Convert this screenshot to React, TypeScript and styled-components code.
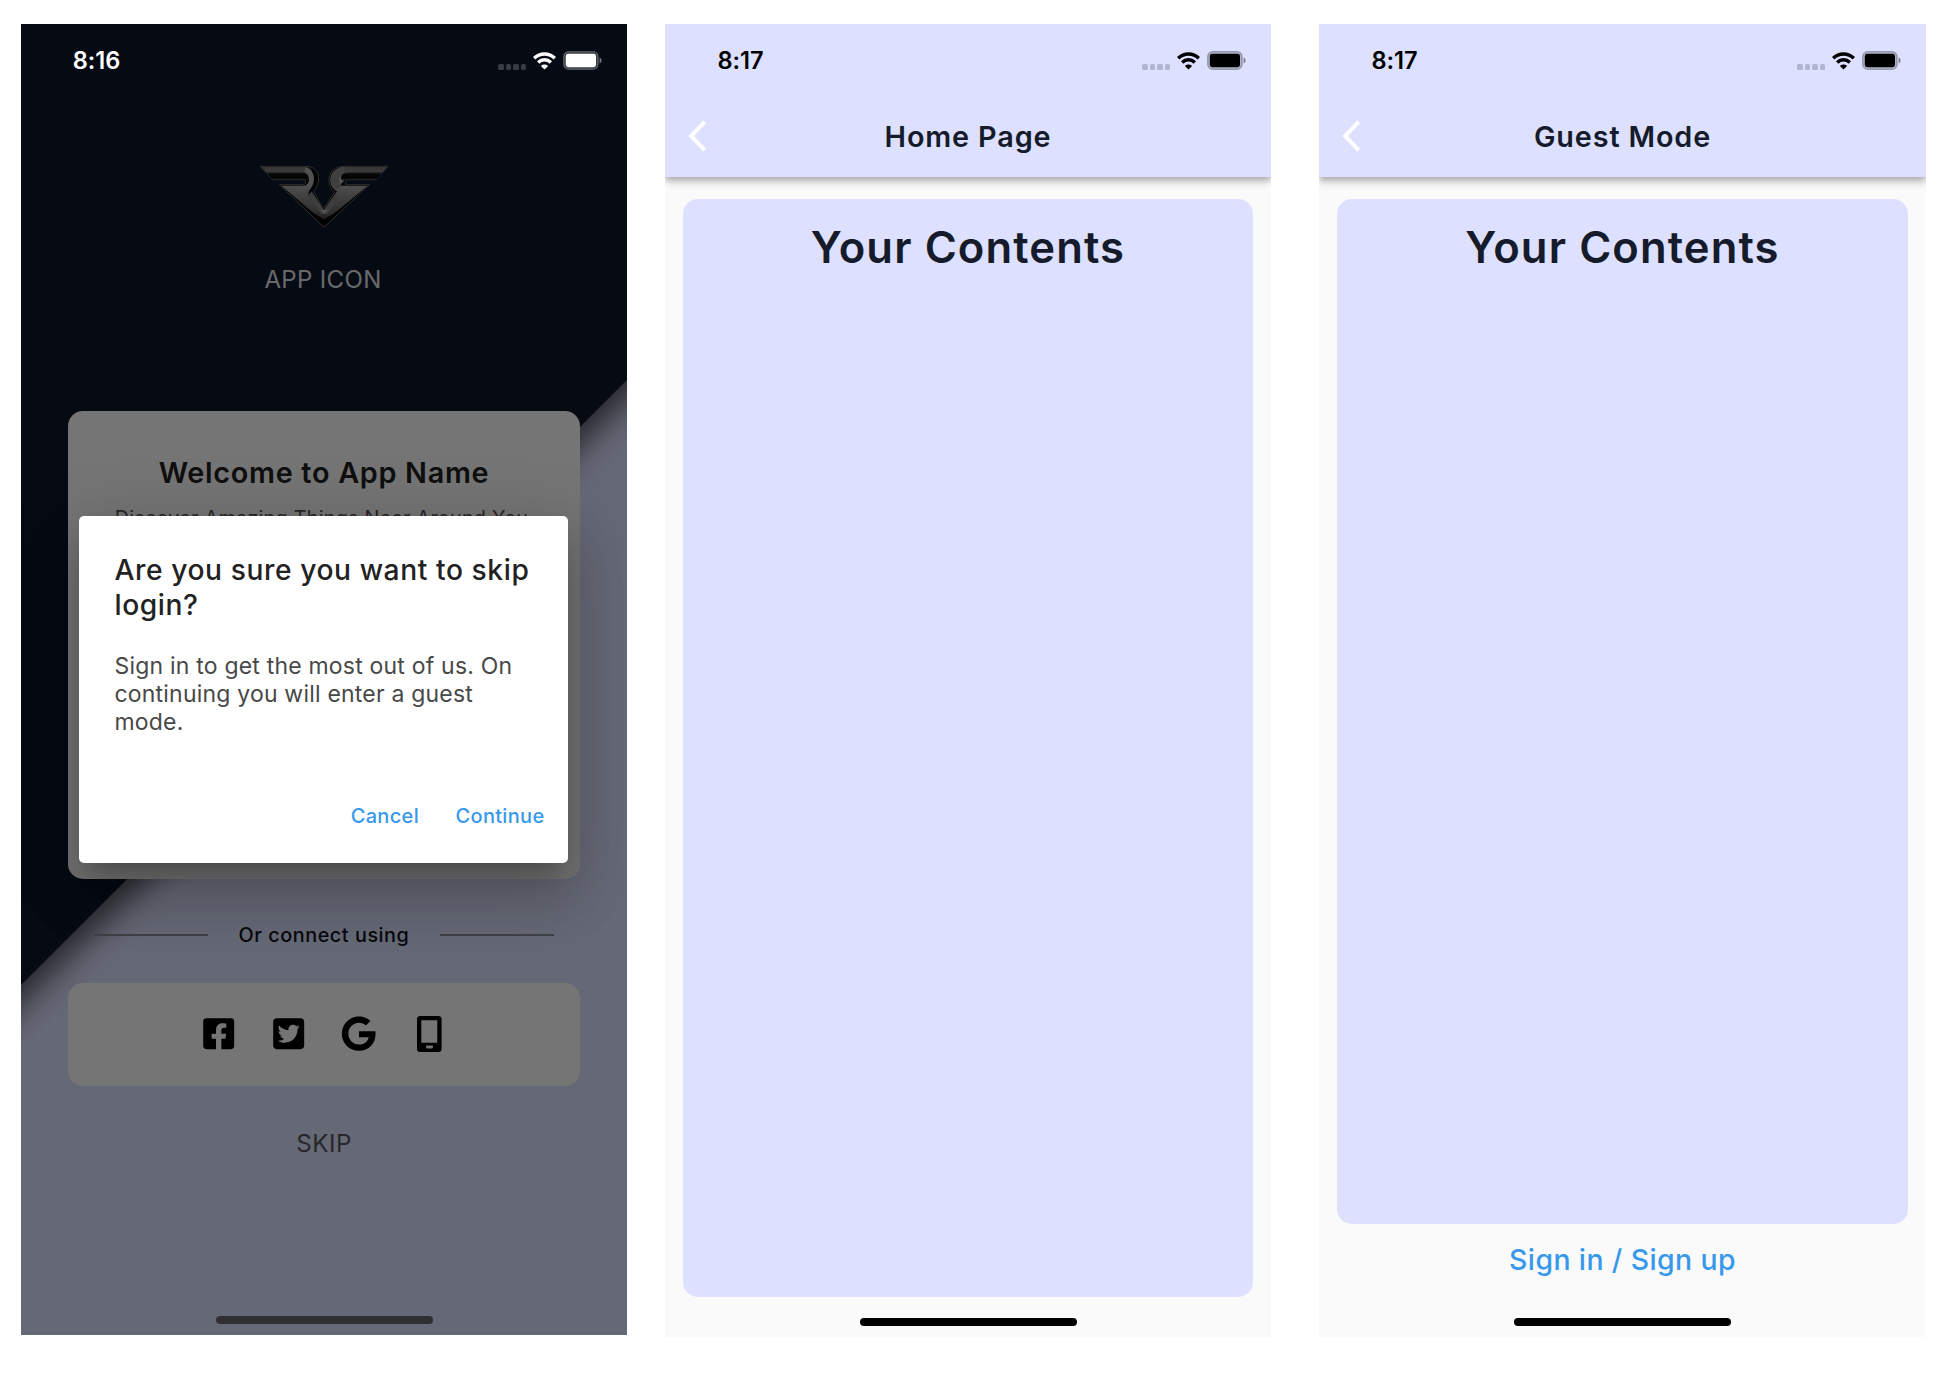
import React from "react";
import styled, { createGlobalStyle } from "styled-components";
import { FaFacebookSquare, FaTwitterSquare, FaGoogle } from "react-icons/fa";

const GlobalStyle = createGlobalStyle`
  * { box-sizing: border-box; }
  body {
    margin: 0;
    background: #fff;
    font-family: Inter, "Liberation Sans", sans-serif;
  }
`;

const Stage = styled.main`
  display: grid;
  grid-template-columns: 606px 606px 607px;
  column-gap: 38px;
  align-items: start;
  width: 1950px;
  height: 1374px;
  padding: 24px 0 0 21px;
  overflow: hidden;

  & > :last-child { margin-left: 10px; margin-right: -10px; }
`;

const Phone = styled.section<{ $bg: string; $height: number }>`
  position: relative;
  display: flex;
  flex-direction: column;
  height: ${(p) => p.$height}px;
  background: ${(p) => p.$bg};
  overflow: hidden;
`;

/* Status bar */

const StatusRow = styled.div<{ $color: string }>`
  position: relative;
  z-index: 3;
  display: flex;
  flex: none;
  align-items: center;
  justify-content: space-between;
  height: 73px;
  padding-right: 25px;
  color: ${(p) => p.$color};
`;

const Clock = styled.span`
  width: 151px;
  text-align: center;
  font-size: 23.6px;
  font-weight: 600;
  letter-spacing: -0.1px;
`;

const Indicators = styled.div`
  display: flex;
  align-items: center;
`;

const Dots = styled.div`
  display: flex;
  gap: 2.2px;
  margin: 12px 7px 0 0;
`;

const Dot = styled.i`
  width: 5.3px;
  height: 6px;
  border-radius: 1.5px;
  background: currentColor;
  opacity: 0.2;
`;

const Wifi = styled.svg`
  width: 23px;
  height: 18px;
  margin-right: 7px;
`;

const Battery = styled.svg`
  width: 39px;
  height: 19px;
`;

function StatusBar({ time, color }: { time: string; color: string }) {
  return (
    <StatusRow $color={color}>
      <Clock>{time}</Clock>
      <Indicators>
        <Dots>
          {[0, 1, 2, 3].map((i) => (
            <Dot key={i} />
          ))}
        </Dots>
        <Wifi viewBox="0 0 23 18" fill="none" stroke="currentColor" strokeWidth="3.5">
          <path d="M1.2 6.2a14.6 14.6 0 0 1 20.6 0" />
          <path d="M5.2 10.4a9 9 0 0 1 12.6 0" />
          <path d="M11.5 17.6 7.9 14a5.1 5.1 0 0 1 7.2 0z" fill="currentColor" stroke="none" />
        </Wifi>
        <Battery viewBox="0 0 39 19">
          <rect x="0.7" y="0.7" width="34.4" height="17.6" rx="5" fill="currentColor" fillOpacity="0.2" stroke="currentColor" strokeOpacity="0.28" strokeWidth="1.3" />
          <rect x="2.8" y="2.8" width="30.2" height="13.4" rx="2.4" fill="currentColor" />
          <path d="M36.6 6.6c2.6.9 2.6 4.9 0 5.8z" fill="currentColor" opacity="0.45" />
        </Battery>
      </Indicators>
    </StatusRow>
  );
}

const HomeIndicator = styled.div<{ $color: string; $bottom: number }>`
  position: absolute;
  z-index: 3;
  left: 50%;
  bottom: ${(p) => p.$bottom}px;
  width: 217px;
  height: 8px;
  margin-left: -108.5px;
  border-radius: 4px;
  background: ${(p) => p.$color};
`;

/* Login screen */

const Backdrop = styled.svg`
  position: absolute;
  inset: 0;
  width: 100%;
  height: 100%;
`;

const Login = styled.div`
  position: relative;
  display: flex;
  flex-direction: column;
  padding: 0 47px;
`;

const Brand = styled.header`
  display: flex;
  flex-direction: column;
  align-items: center;
  height: 314px;
  padding-top: 68px;
`;

const Emblem = styled.svg`
  width: 130px;
  height: 63px;
`;

const BrandName = styled.span`
  margin: 37px 2px 0 0;
  font-size: 24px;
  line-height: 30px;
  letter-spacing: 0.35px;
  color: #e2e4ea;
`;

const Card = styled.div<{ $height: number }>`
  height: ${(p) => p.$height}px;
  border-radius: 15px;
  background: #fff;
`;

const WelcomeCard = styled(Card)`
  padding-top: 43.5px;
  text-align: center;
`;

const Welcome = styled.h1`
  margin: 0;
  font-size: 28.8px;
  line-height: 36px;
  font-weight: 600;
  letter-spacing: 0.7px;
  color: #222;
`;

const Tagline = styled.p`
  margin: 14px 5px 0 0;
  font-size: 19.8px;
  line-height: 26px;
  letter-spacing: 0.25px;
  color: #555;
  white-space: nowrap;
`;

const Divider = styled.div`
  display: flex;
  align-items: center;
  justify-content: space-between;
  height: 103.5px;
  padding: 7.5px 26px 0;
  font-size: 19.8px;
  font-weight: 500;
  letter-spacing: 0.55px;
  color: #10131c;
`;

const Rule = styled.i`
  width: 114px;
  height: 2px;
  background: #8b8b9c;
`;

const SocialCard = styled(Card)`
  display: flex;
  align-items: center;
  justify-content: center;
  color: #000;

  svg { flex: none; }
`;

const IconSlot = styled.span`
  display: flex;
  align-items: center;
  justify-content: center;
  width: 70.3px;
`;

const Skip = styled.span`
  height: 115px;
  line-height: 115px;
  text-align: center;
  font-size: 24.2px;
  letter-spacing: 0.5px;
  color: #55565e;
`;

const Scrim = styled.div`
  position: absolute;
  inset: 0;
  z-index: 2;
  display: flex;
  align-items: flex-start;
  padding: 492px 58px 0;
  background: rgba(0, 0, 0, 0.54);
`;

const Dialog = styled.div`
  display: flex;
  flex-direction: column;
  width: 489px;
  height: 347px;
  padding: 36.5px 23.5px 37px 35.5px;
  border-radius: 5px;
  background: #fff;
  box-shadow: 0 16px 22px -10px rgba(0, 0, 0, 0.2),
    0 35px 56px 4px rgba(0, 0, 0, 0.14), 0 13px 67px 12px rgba(0, 0, 0, 0.12);
`;

const DialogTitle = styled.h2`
  margin: 0;
  font-size: 28.2px;
  line-height: 35px;
  font-weight: 500;
  letter-spacing: 0.58px;
  color: #222;
  white-space: pre;
`;

const DialogText = styled.p`
  margin: 30.5px 0 0;
  font-size: 23px;
  line-height: 27.8px;
  letter-spacing: 0.2px;
  color: #484848;
  white-space: pre;
`;

const Actions = styled.div`
  display: flex;
  justify-content: flex-end;
  gap: 36.5px;
  margin-top: auto;
`;

const TextButton = styled.button<{ $large?: boolean }>`
  padding: 0;
  border: 0;
  background: none;
  font: 500 ${(p) => (p.$large ? 28.4 : 20)}px / ${(p) => (p.$large ? 36 : 20)}px Inter,
    "Liberation Sans", sans-serif;
  letter-spacing: ${(p) => (p.$large ? 0.4 : 0.32)}px;
  color: #3798ec;
`;

function BrandEmblem() {
  return (
    <Emblem viewBox="57 45 390 189">
      <defs>
        <linearGradient id="wing" x1="0" y1="49" x2="0" y2="90" gradientUnits="userSpaceOnUse">
          <stop offset="0" stopColor="#757375" />
          <stop offset="0.38" stopColor="#857e81" />
          <stop offset="0.55" stopColor="#141414" />
          <stop offset="0.85" stopColor="#040404" />
          <stop offset="1" stopColor="#555" />
        </linearGradient>
        <linearGradient id="keel" x1="0" y1="104" x2="0" y2="230" gradientUnits="userSpaceOnUse">
          <stop offset="0" stopColor="#b0b0b0" />
          <stop offset="0.2" stopColor="#969696" />
          <stop offset="0.6" stopColor="#6c6c6c" />
          <stop offset="1" stopColor="#2a2a2a" />
        </linearGradient>
      </defs>
      <path d="M60 49H198C224 49 236 66 236 85C236 102 229 114 221 124L250 178L284 126C272 117 267 105 267 90C267 65 284 49 312 49H444L408 89H326C318 89 316 94 316 104H388L252 232L118 104H190C198 104 200 89 190 89H98Z" fill="#050505" stroke="#666" strokeWidth="3" />
      <path d="M64 51H196C208 51 216 60 218 72L204 89H99Z" fill="url(#wing)" />
      <path d="M441 51H314C297 51 283 61 277 76L300 89H408Z" fill="url(#wing)" />
      <path d="M124 107H190C202 107 208 96 207 86C206 77 201 71 193 67L196 52C213 56 222 70 222 87C222 101 216 111 208 121L204 134L252 197L252 216Z" fill="url(#keel)" />
      <path d="M383 107H298L314 91H308C300 87 302 75 313 68L314 51C291 51 271 66 271 90C271 108 281 117 291 124L252 180V216Z" fill="url(#keel)" />
      <path d="M318 51C292 51 273 66 273 89C273 104 281 113 291 117L306 106C292 97 292 75 318 68Z" fill="#808080" opacity="0.8" />
      <path d="M204 134L244 193H262L300 137L287 129L252 181L216 125Z" fill="#858585" />
      <path d="M242 180H264L253 191Z" fill="#b8b8b8" />
      <path d="M196 174L252 228L310 174L252 208Z" fill="#050505" />
    </Emblem>
  );
}

function LoginScreen() {
  return (
    <Phone $bg="#dde3ff" $height={1311}>
      <Backdrop viewBox="0 0 606 1311">
        <defs>
          <filter id="slope" x="-20%" y="-20%" width="140%" height="140%">
            <feDropShadow dx="0" dy="20" stdDeviation="16" floodColor="#000" floodOpacity="0.62" />
          </filter>
        </defs>
        <path d="M-200-49.5L0-49.5H806V156.3L-200 1160.7Z" fill="#111829" filter="url(#slope)" />
      </Backdrop>
      <StatusBar time="8:16" color="#fff" />
      <Login>
        <Brand>
          <BrandEmblem />
          <BrandName>APP ICON</BrandName>
        </Brand>
        <WelcomeCard $height={468}>
          <Welcome>Welcome to App Name</Welcome>
          <Tagline>Discover Amazing Things Near Around You</Tagline>
        </WelcomeCard>
        <Divider>
          <Rule />
          <span>Or connect using</span>
          <Rule />
        </Divider>
        <SocialCard $height={103}>
          <IconSlot><FaFacebookSquare size={35.4} /></IconSlot>
          <IconSlot><FaTwitterSquare size={35.4} /></IconSlot>
          <IconSlot><FaGoogle size={35.4} /></IconSlot>
          <IconSlot>
            <svg width="25" height="36" viewBox="0 0 25 36">
              <path fillRule="evenodd" d="M3.2 0H21.4Q24.6 0 24.6 3.2V32.8Q24.6 36 21.4 36H3.2Q0 36 0 32.8V3.2Q0 0 3.2 0ZM4.3 4.2V26.8H20.3V4.2ZM10 29.6Q9 29.6 9 31T10 32.4H15Q16 32.4 16 31T15 29.6Z" />
            </svg>
          </IconSlot>
        </SocialCard>
        <Skip>SKIP</Skip>
      </Login>
      <Scrim>
        <Dialog>
          <DialogTitle>{"Are you sure you want to skip\nlogin?"}</DialogTitle>
          <DialogText>{"Sign in to get the most out of us. On\ncontinuing you will enter a guest\nmode."}</DialogText>
          <Actions>
            <TextButton>Cancel</TextButton>
            <TextButton>Continue</TextButton>
          </Actions>
        </Dialog>
      </Scrim>
      <HomeIndicator $color="#303033" $bottom={11} />
    </Phone>
  );
}

/* Content screens */

const AppBar = styled.header`
  position: relative;
  z-index: 1;
  height: 153px;
  flex: none;
  background: #dde1ff;
  box-shadow: 0 3px 6px -1px rgba(0, 0, 0, 0.2), 0 6px 7px rgba(0, 0, 0, 0.12),
    0 1px 14px rgba(0, 0, 0, 0.1);
`;

const TitleRow = styled.div`
  display: grid;
  grid-template-columns: 64px 1fr 64px;
  align-items: center;
  height: 78px;
`;

const Chevron = styled.svg`
  width: 20px;
  height: 32px;
  margin-left: 22px;
`;

const Title = styled.h1`
  margin: 0;
  text-align: center;
  font-size: 28.8px;
  font-weight: 600;
  letter-spacing: 0.85px;
  color: #151b2b;
`;

const ContentCard = styled.div<{ $height: number }>`
  height: ${(p) => p.$height}px;
  margin: 22px 18px 0;
  padding-top: 24px;
  border-radius: 15px;
  background: #dde1ff;
`;

const Heading = styled.h2`
  margin: 0;
  text-align: center;
  font-size: 43.6px;
  line-height: 50px;
  font-weight: 600;
  letter-spacing: 1.1px;
  color: #151b2b;
`;

const Footer = styled.footer`
  display: flex;
  justify-content: center;
  padding-top: 18px;
`;

function ContentScreen({ title, cardHeight, children }: { title: string; cardHeight: number; children?: React.ReactNode }) {
  return (
    <Phone $bg="#fafafa" $height={1313}>
      <AppBar>
        <StatusBar time="8:17" color="#000" />
        <TitleRow>
          <Chevron viewBox="0 0 20 32" fill="none" stroke="#fff" strokeWidth="4">
            <path d="M17.8 1.8 4 16 17.8 30.2" />
          </Chevron>
          <Title>{title}</Title>
        </TitleRow>
      </AppBar>
      <ContentCard $height={cardHeight}>
        <Heading>Your Contents</Heading>
      </ContentCard>
      {children}
      <HomeIndicator $color="#000" $bottom={11.5} />
    </Phone>
  );
}

export default function App() {
  return (
    <>
      <GlobalStyle />
      <Stage>
        <LoginScreen />
        <ContentScreen title="Home Page" cardHeight={1098} />
        <ContentScreen title="Guest Mode" cardHeight={1025}>
          <Footer>
            <TextButton $large>Sign in / Sign up</TextButton>
          </Footer>
        </ContentScreen>
      </Stage>
    </>
  );
}
